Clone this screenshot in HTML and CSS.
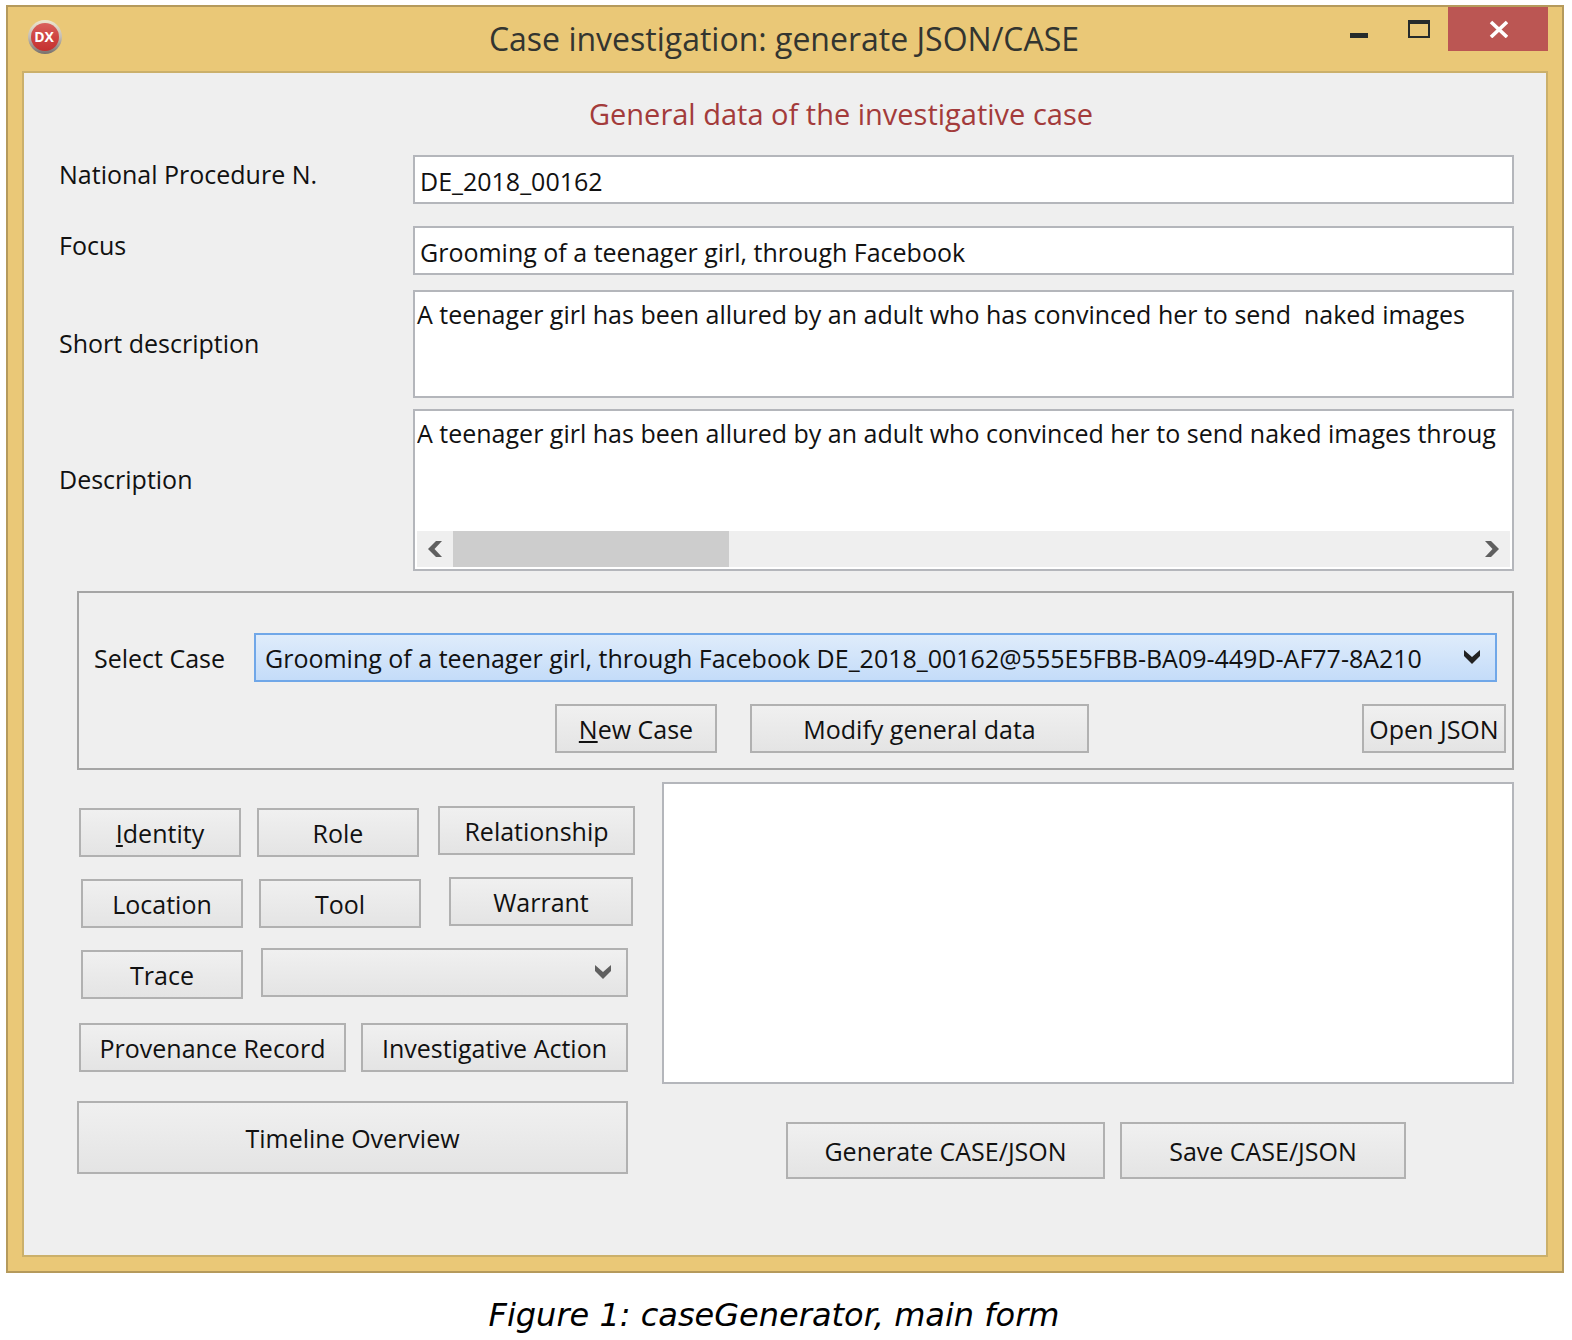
FILE: index.html
```html
<!DOCTYPE html>
<html lang="en">
<head>
<meta charset="utf-8">
<title>Case investigation: generate JSON/CASE</title>
<link rel="stylesheet" href="styles.css">
</head>
<body>
<figure class="figure">
  <div class="window">
    <header class="titlebar">
      <svg class="app-icon" viewBox="0 0 36 36" role="img" aria-label="DX">
        <defs>
          <linearGradient id="rim" x1="0" y1="0" x2="0" y2="1">
            <stop offset="0" stop-color="#efe6cf"/>
            <stop offset="0.5" stop-color="#c4bdb4"/>
            <stop offset="1" stop-color="#77706c"/>
          </linearGradient>
          <linearGradient id="disc" x1="0" y1="0" x2="0" y2="1">
            <stop offset="0" stop-color="#d9605c"/>
            <stop offset="0.5" stop-color="#cf4442"/>
            <stop offset="1" stop-color="#c4302e"/>
          </linearGradient>
        </defs>
        <circle cx="18" cy="18" r="17" fill="url(#rim)"/>
        <circle cx="18" cy="18" r="14" fill="url(#disc)"/>
        <text class="app-icon__text" x="17" y="23" text-anchor="middle">DX</text>
      </svg>
      <h1 class="titlebar__title">Case investigation: generate JSON/CASE</h1>
      <div class="titlebar__controls">
        <button class="winbtn" type="button" aria-label="Minimize">
          <svg width="20" height="20" viewBox="0 0 20 20"><rect x="2" y="14" width="18" height="5" fill="#262b2b"/></svg>
        </button>
        <button class="winbtn" type="button" aria-label="Maximize">
          <svg width="24" height="20" viewBox="0 0 24 20"><path fill="#262b2b" fill-rule="evenodd" d="M2 1h22v18H2zM4 5v12h18V5z"/></svg>
        </button>
        <button class="winbtn winbtn--close" type="button" aria-label="Close">
          <svg width="20" height="18" viewBox="0 0 20 18"><path fill="none" stroke="#fff" stroke-width="3.600" d="M3 2L19 17M19 2L3 17"/></svg>
        </button>
      </div>
    </header>

    <form class="client">
      <h2 class="heading">General data of the investigative case</h2>

      <div class="field field--line">
        <label class="field__label" for="procedure">National Procedure N.</label>
        <input class="box box--input" id="procedure" type="text" value="DE_2018_00162">
      </div>
      <div class="field field--line">
        <label class="field__label" for="focus">Focus</label>
        <input class="box box--input" id="focus" type="text" value="Grooming of a teenager girl, through Facebook">
      </div>
      <div class="field field--short">
        <label class="field__label" for="short">Short description</label>
        <textarea class="box box--memo" id="short" wrap="off">A teenager girl has been allured by an adult who has convinced her to send  naked images</textarea>
      </div>
      <div class="field field--long">
        <label class="field__label" for="long">Description</label>
        <div class="box scrollbox">
          <textarea class="scrollbox__text" id="long" wrap="off">A teenager girl has been allured by an adult who convinced her to send naked images throug</textarea>
          <div class="scrollbar">
            <button class="scrollbar__arrow" type="button" aria-label="Scroll left">
              <svg width="14" height="16" viewBox="0 0 14 16"><path fill="#5f5f5f" d="M8 0h6L6.500 8L14 16H8L0 8z"/></svg>
            </button>
            <div class="scrollbar__track"><div class="scrollbar__thumb"></div></div>
            <button class="scrollbar__arrow" type="button" aria-label="Scroll right">
              <svg width="14" height="16" viewBox="0 0 14 16"><path fill="#5f5f5f" d="M6 0H0L7.500 8L0 16H6L14 8z"/></svg>
            </button>
          </div>
        </div>
      </div>

      <section class="group">
        <div class="group__select">
          <label for="case">Select Case</label>
          <div class="combo">
            <select class="combo__select combo__select--active" id="case">
              <option>Grooming of a teenager girl, through Facebook DE_2018_00162@555E5FBB-BA09-449D-AF77-8A210</option>
            </select>
            <svg class="combo__arrow combo__arrow--active" width="16" height="14" viewBox="0 0 16 14"><path d="M0 0L8 7L16 0V6L8 14L0 6z"/></svg>
          </div>
        </div>
        <div class="group__actions">
          <button class="btn btn--small" type="button"><u>N</u>ew Case</button>
          <button class="btn btn--modify" type="button">Modify general data</button>
          <button class="btn btn--open" type="button">Open JSON</button>
        </div>
      </section>

      <div class="lower">
        <div class="palette">
          <div class="palette__row">
            <button class="btn btn--small" type="button"><u>I</u>dentity</button>
            <button class="btn btn--small" type="button">Role</button>
            <button class="btn btn--relationship" type="button">Relationship</button>
          </div>
          <div class="palette__row palette__row--inset">
            <button class="btn btn--small" type="button">Location</button>
            <button class="btn btn--small" type="button">Tool</button>
            <button class="btn btn--warrant" type="button">Warrant</button>
          </div>
          <div class="palette__row palette__row--inset palette__row--short">
            <button class="btn btn--small" type="button">Trace</button>
            <div class="combo combo--raised">
              <select class="combo__select" aria-label="Trace type"><option></option></select>
              <svg class="combo__arrow" width="16" height="14" viewBox="0 0 16 14"><path d="M0 0L8 7L16 0V6L8 14L0 6z"/></svg>
            </div>
          </div>
          <div class="palette__records">
            <button class="btn btn--wide" type="button">Provenance Record</button>
            <button class="btn btn--wide" type="button">Investigative Action</button>
          </div>
          <button class="btn btn--timeline" type="button">Timeline Overview</button>
        </div>
        <div class="output">
          <textarea class="box output__text" aria-label="Generated output"></textarea>
          <div class="output__actions">
            <button class="btn btn--generate" type="button">Generate CASE/JSON</button>
            <button class="btn btn--save" type="button">Save CASE/JSON</button>
          </div>
        </div>
      </div>
    </form>
  </div>
  <figcaption class="caption">Figure 1: caseGenerator, main form</figcaption>
</figure>
</body>
</html>
```
FILE: styles.css
```css
* {
  box-sizing: border-box;
}

body {
  margin: 0;
  background: #fff;
  color: #111;
  font: 25px/36px "Open Sans", "Noto Sans", sans-serif;
}

button,
input,
select,
textarea {
  margin: 0;
  color: inherit;
  font: inherit;
}

.figure {
  margin: 0;
  padding: 5px 8px 0 6px;
}

/* Window frame */

.window {
  padding: 0 14px 14px;
  border: 2px solid #b59a5c;
  background: #eac877;
}

.titlebar {
  position: relative;
  display: flex;
  justify-content: space-between;
  height: 64px;
}

.app-icon {
  width: 36px;
  height: 36px;
  margin: 12px 0 0 5px;
}

.app-icon__text {
  fill: #fff;
  font: bold 14px "Open Sans", sans-serif;
}

.titlebar__title {
  position: absolute;
  inset: 10px 2px 0 0;
  margin: 0;
  color: #333530;
  font-size: 32px;
  font-weight: 400;
  line-height: 44px;
  text-align: center;
  pointer-events: none;
}

.titlebar__controls {
  display: flex;
}

.winbtn {
  display: flex;
  justify-content: center;
  align-items: center;
  width: 60px;
  height: 44px;
  padding: 0;
  border: 0;
  background: none;
}

.winbtn--close {
  width: 100px;
  background: #bb5653;
}

.client {
  padding: 20px 32px 76px 35px;
  border: 2px solid #cbb06b;
  background: #efefef;
}

.heading {
  margin: 0 0 20px;
  padding-left: 109px;
  color: #a33b3b;
  font-size: 29px;
  font-weight: 400;
  line-height: 42px;
  text-align: center;
}

/* General data fields */

.field {
  display: grid;
  grid-template-columns: 354px minmax(0, 1fr);
}

.field--line {
  align-items: start;
  margin-bottom: 22px;
}

.field--line .field__label {
  padding-top: 1px;
}

.field--short {
  align-items: center;
  margin: -7px 0 11px;
}

.field--short .field__label {
  padding-bottom: 3px;
}

.field--long {
  align-items: center;
  margin-bottom: 20px;
}

.field--long .field__label {
  padding-bottom: 22px;
}

.box {
  width: 100%;
  border: 2px solid #b4b6bb;
  border-radius: 0;
  background: #fff;
  outline: 0;
}

.box--input {
  height: 49px;
  padding: 2px 5px 0;
}

.box--memo {
  display: block;
  height: 108px;
  padding: 4px 2px;
  overflow: hidden;
  resize: none;
}

.scrollbox {
  height: 162px;
  padding: 4px 2px 2px;
}

.scrollbox__text {
  display: block;
  width: 100%;
  height: 116px;
  padding: 0;
  border: 0;
  overflow: hidden;
  outline: 0;
  resize: none;
}

.scrollbar {
  display: flex;
  height: 36px;
  background: #efefef;
}

.scrollbar__arrow {
  display: flex;
  justify-content: center;
  align-items: center;
  width: 36px;
  padding: 0;
  border: 0;
  background: none;
}

.scrollbar__track {
  flex: 1;
}

.scrollbar__thumb {
  width: 27%;
  height: 100%;
  background: #cdcdcd;
}

/* Case selection */

.group {
  margin: 0 0 12px 18px;
  padding: 40px 6px 15px 15px;
  border: 2px solid #a5a5a5;
}

.group__select {
  display: grid;
  grid-template-columns: 160px minmax(0, 1fr);
  align-items: center;
  padding-right: 9px;
}

.group__actions {
  display: flex;
  margin-top: 22px;
  padding-left: 461px;
}

.combo {
  position: relative;
  flex: 1;
}

.combo__select {
  display: block;
  width: 100%;
  height: 49px;
  padding: 0 46px 0 9px;
  border: 2px solid #b1b1b1;
  border-radius: 0;
  background: linear-gradient(#f0f0f0, #e4e4e4);
  appearance: none;
}

.combo__select--active {
  border-color: #70a7e8;
  background: linear-gradient(#dfecfb, #c4dcf9);
}

.combo__arrow {
  position: absolute;
  top: 17px;
  right: 17px;
  fill: #606060;
  pointer-events: none;
}

.combo__arrow--active {
  fill: #222;
}

.btn {
  height: 49px;
  padding: 0;
  border: 2px solid #b1b1b1;
  border-radius: 0;
  background: linear-gradient(#f0f0f0, #e4e4e4);
  white-space: nowrap;
}

.btn--small {
  width: 162px;
}

.btn--modify {
  width: 339px;
  margin-left: 33px;
}

.btn--open {
  width: 144px;
  margin-left: auto;
}

/* Object buttons and output */

.lower {
  display: grid;
  grid-template-columns: 558px minmax(0, 1fr);
  gap: 27px;
  padding-left: 18px;
}

.palette {
  padding-top: 24px;
}

.palette__row {
  display: flex;
  align-items: flex-end;
  gap: 16px;
  height: 51px;
  margin-bottom: 20px;
  padding-left: 2px;
}

.palette__row--inset {
  padding: 0 2px 0 4px;
}

.palette__row--short {
  gap: 18px;
  padding-right: 7px;
}

.palette__records {
  display: flex;
  gap: 15px;
  margin: 24px 7px 29px 2px;
}

.btn--relationship,
.btn--warrant {
  align-self: flex-start;
  margin-left: auto;
}

.btn--relationship {
  width: 197px;
}

.btn--warrant {
  width: 184px;
}

.combo--raised {
  align-self: flex-start;
}

.btn--wide {
  flex: 1;
}

.btn--timeline {
  width: 551px;
  height: 73px;
}

.output__text {
  display: block;
  height: 302px;
  resize: none;
}

.output__actions {
  display: flex;
  justify-content: center;
  gap: 15px;
  margin-top: 38px;
  padding-left: 16px;
}

.output__actions .btn {
  height: 57px;
}

.btn--generate {
  width: 319px;
}

.btn--save {
  width: 286px;
}

.caption {
  padding: 22px 22px 0 0;
  color: #000;
  font: italic 32px/40px "DejaVu Sans", sans-serif;
  text-align: center;
}
```
